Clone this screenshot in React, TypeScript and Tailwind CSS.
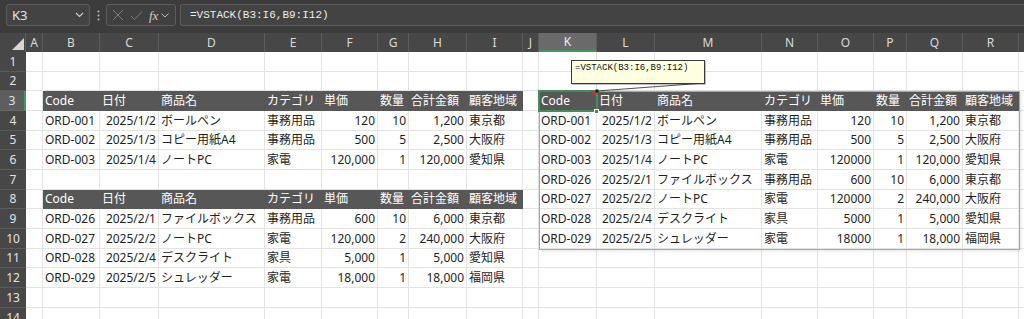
import React from "react";

const COLS: { key: string; w: string }[] = [
  { key: "A", w: "w-[17px]" },
  { key: "B", w: "w-[57px]" },
  { key: "C", w: "w-[59px]" },
  { key: "D", w: "w-[106px]" },
  { key: "E", w: "w-[57px]" },
  { key: "F", w: "w-[56px]" },
  { key: "G", w: "w-[31px]" },
  { key: "H", w: "w-[58px]" },
  { key: "I", w: "w-[56px]" },
  { key: "J", w: "w-[16px]" },
  { key: "K", w: "w-[58px]" },
  { key: "L", w: "w-[58px]" },
  { key: "M", w: "w-[107px]" },
  { key: "N", w: "w-[56px]" },
  { key: "O", w: "w-[56px]" },
  { key: "P", w: "w-[33px]" },
  { key: "Q", w: "w-[56px]" },
  { key: "R", w: "w-[56px]" },
  { key: "S", w: "w-[60px]" },
];

const HEADER = ["Code", "日付", "商品名", "カテゴリ", "単価", "数量", "合計金額", "顧客地域"];
const ALIGN = [false, true, false, false, true, true, true, false];

const L4 = ["ORD-001", "2025/1/2", "ボールペン", "事務用品", "120", "10", "1,200", "東京都"];
const L5 = ["ORD-002", "2025/1/3", "コピー用紙A4", "事務用品", "500", "5", "2,500", "大阪府"];
const L6 = ["ORD-003", "2025/1/4", "ノートPC", "家電", "120,000", "1", "120,000", "愛知県"];
const L9 = ["ORD-026", "2025/2/1", "ファイルボックス", "事務用品", "600", "10", "6,000", "東京都"];
const L10 = ["ORD-027", "2025/2/2", "ノートPC", "家電", "120,000", "2", "240,000", "大阪府"];
const L11 = ["ORD-028", "2025/2/4", "デスクライト", "家具", "5,000", "1", "5,000", "愛知県"];
const L12 = ["ORD-029", "2025/2/5", "シュレッダー", "家電", "18,000", "1", "18,000", "福岡県"];

const R4 = ["ORD-001", "2025/1/2", "ボールペン", "事務用品", "120", "10", "1,200", "東京都"];
const R5 = ["ORD-002", "2025/1/3", "コピー用紙A4", "事務用品", "500", "5", "2,500", "大阪府"];
const R6 = ["ORD-003", "2025/1/4", "ノートPC", "家電", "120000", "1", "120,000", "愛知県"];
const R7 = ["ORD-026", "2025/2/1", "ファイルボックス", "事務用品", "600", "10", "6,000", "東京都"];
const R8 = ["ORD-027", "2025/2/2", "ノートPC", "家電", "120000", "2", "240,000", "大阪府"];
const R9 = ["ORD-028", "2025/2/4", "デスクライト", "家具", "5000", "1", "5,000", "愛知県"];
const R10 = ["ORD-029", "2025/2/5", "シュレッダー", "家電", "18000", "1", "18,000", "福岡県"];

const LEFT: Record<number, string[] | "H"> = { 3: "H", 4: L4, 5: L5, 6: L6, 8: "H", 9: L9, 10: L10, 11: L11, 12: L12 };
const RIGHT: Record<number, string[] | "H"> = { 3: "H", 4: R4, 5: R5, 6: R6, 7: R7, 8: R8, 9: R9, 10: R10 };

const ROW_H: Record<number, string> = {
  1: "h-[20px]", 2: "h-[19px]", 3: "h-[20px]", 4: "h-[20px]", 5: "h-[19px]", 6: "h-[20px]", 7: "h-[20px]",
  8: "h-[19px]", 9: "h-[20px]", 10: "h-[20px]", 11: "h-[19px]", 12: "h-[20px]", 13: "h-[20px]", 14: "h-[20px]",
};

function DataCell({ w, text, right, header }: { w: string; text: string; right: boolean; header: boolean }) {
  if (header) {
    return (
      <div className={`${w} h-full shrink-0 bg-[#575757] border-b border-[#575757] text-white flex items-center pl-[2px] whitespace-nowrap`}>
        {text}
      </div>
    );
  }
  return (
    <div
      className={`${w} h-full shrink-0 border-r border-b border-[#e3e3e3] text-[#1e1e1e] flex items-center px-[2px] whitespace-nowrap ${right ? "justify-end" : "justify-start"}`}
    >
      {text}
    </div>
  );
}

function Row({ n }: { n: number }) {
  const left = LEFT[n];
  const right = RIGHT[n];
  const cells: React.ReactNode[] = [];
  COLS.forEach((c, idx) => {
    let text = "";
    let header = false;
    let r = false;
    if (idx >= 1 && idx <= 8 && left) {
      const i = idx - 1;
      if (left === "H") { header = true; text = HEADER[i]; } else { text = left[i]; r = ALIGN[i]; }
    } else if (idx >= 10 && idx <= 17 && right) {
      const i = idx - 10;
      if (right === "H") { header = true; text = HEADER[i]; } else { text = right[i]; r = ALIGN[i]; }
    }
    cells.push(<DataCell key={c.key} w={c.w} text={text} right={r} header={header} />);
  });
  const sel = n === 3;
  return (
    <div className={`flex ${ROW_H[n]}`}>
      <div
        className={`w-[26px] h-full shrink-0 flex items-center justify-center text-[12px] text-[#e2e2e2] border-b ${
          sel ? "bg-[#5e5e5e] border-[#6a6a6a] border-r-2 border-r-[#3f9a62]" : "bg-[#474747] border-[#5a5a5a]"
        }`}
      >
        {n}
      </div>
      {cells}
    </div>
  );
}

function ColHeader() {
  return (
    <div className="flex h-[19px] bg-[#474747]">
      <div className="w-[26px] h-full shrink-0 relative border-r border-[#5c5c5c]">
        <svg width="26" height="19" className="absolute left-0 top-0">
          <polygon points="12,17 24,17 24,5" fill="#d6d6d6" />
        </svg>
      </div>
      {COLS.map((c) => (
        <div
          key={c.key}
          className={`${c.w} h-full shrink-0 flex items-center justify-center text-[12px] border-r border-[#5c5c5c] ${
            c.key === "K" ? "bg-[#6a6a6a] text-[#f0f0f0] border-b-2 border-b-[#3f9a62]" : "text-[#dadada]"
          }`}
        >
          {c.key === "S" ? "" : c.key}
        </div>
      ))}
    </div>
  );
}

function TopBar() {
  return (
    <div className="h-[33px] bg-[#3c3c3c] flex items-start pt-[4px]">
      <div className="ml-[6px] w-[84px] h-[22px] rounded-[3px] border border-[#5e5e5e] bg-[#434343] flex items-center justify-between pl-[5px] pr-[5px]">
        <span className="text-[13px] text-[#e4e4e4] leading-none">K3</span>
        <svg width="9" height="6" viewBox="0 0 9 6">
          <path d="M1 1 L4.5 4.5 L8 1" stroke="#cfcfcf" strokeWidth="1.1" fill="none" />
        </svg>
      </div>
      <div className="w-[16px] h-[22px] flex items-center justify-center">
        <svg width="3" height="11" viewBox="0 0 3 11">
          <circle cx="1.5" cy="1.5" r="1" fill="#bdbdbd" />
          <circle cx="1.5" cy="5.5" r="1" fill="#bdbdbd" />
          <circle cx="1.5" cy="9.5" r="1" fill="#bdbdbd" />
        </svg>
      </div>
      <div className="w-[70px] h-[22px] rounded-[3px] border border-[#5e5e5e] bg-[#404040] flex items-center pl-[5px] gap-[6px]">
        <svg width="12" height="12" viewBox="0 0 12 12">
          <path d="M1 1 L11 11 M11 1 L1 11" stroke="#7d7d7d" strokeWidth="1" fill="none" />
        </svg>
        <svg width="13" height="11" viewBox="0 0 13 11">
          <path d="M1 6 L4.5 9.5 L12 1.5" stroke="#7d7d7d" strokeWidth="1" fill="none" />
        </svg>
        <span className="text-[13px] italic text-[#cfcfcf] leading-none" style={{ fontFamily: '"Liberation Serif", serif' }}>
          fx
        </span>
        <svg width="8" height="5" viewBox="0 0 8 5" className="-ml-[3px]">
          <path d="M0.5 0.5 L4 4 L7.5 0.5" stroke="#bdbdbd" strokeWidth="1" fill="none" />
        </svg>
      </div>
      <div className="ml-[4px] flex-1 h-[22px] rounded-l-[3px] border border-r-0 border-[#5e5e5e] bg-[#434343] flex items-center pl-[9px]">
        <span className="text-[11px] text-[#ececec] leading-none" style={{ fontFamily: '"Liberation Mono", monospace' }}>
          =VSTACK(B3:I6,B9:I12)
        </span>
      </div>
    </div>
  );
}

export default function App() {
  const rows = Array.from({ length: 14 }, (_, i) => i + 1);
  return (
    <div
      className="w-[1024px] h-[319px] overflow-hidden bg-white text-[12px]"
      style={{ fontFamily: '"Noto Sans", "Noto Sans CJK JP", sans-serif' }}
    >
      <TopBar />
      <div className="relative">
        <ColHeader />
        {rows.map((n) => (
          <Row key={n} n={n} />
        ))}
        {/* spill range border */}
        <div className="absolute left-[539px] top-[58px] w-[481px] h-[159px] border border-[#8fabe0] shadow-[1px_1px_3px_rgba(0,0,0,0.12)] pointer-events-none" />
        {/* selection K3 */}
        <div className="absolute left-[538px] top-[57px] w-[60px] h-[22px] border-2 border-[#3f8f5c] pointer-events-none" />
        <div className="absolute left-[594px] top-[76px] w-[5px] h-[5px] bg-[#3f8f5c] border border-white pointer-events-none" />
        {/* comment indicator */}
        <svg className="absolute left-[590px] top-[58px] pointer-events-none" width="7" height="7" viewBox="0 0 7 7">
          <polygon points="0,0 6,0 6,6" fill="#e0282d" />
        </svg>
        {/* comment arrow line */}
        <svg className="absolute left-[594px] top-[46px] pointer-events-none" width="115" height="16" viewBox="0 0 115 16">
          <line x1="111" y1="4" x2="3" y2="12" stroke="#222" strokeWidth="0.8" />
          <rect x="1.5" y="10.5" width="3" height="3" fill="#111" />
        </svg>
        {/* comment box */}
        <div className="absolute left-[571px] top-[27px] w-[134px] h-[24px] bg-[#ffffe1] border border-[#3a3a3a] shadow-[1px_1px_0_rgba(0,0,0,0.25)] px-[3px] pt-[1px] pointer-events-none">
          <span className="text-[9px] text-[#111] leading-[12px] block" style={{ fontFamily: '"Liberation Mono", monospace' }}>
            =VSTACK(B3:I6,B9:I12)
          </span>
        </div>
      </div>
    </div>
  );
}
